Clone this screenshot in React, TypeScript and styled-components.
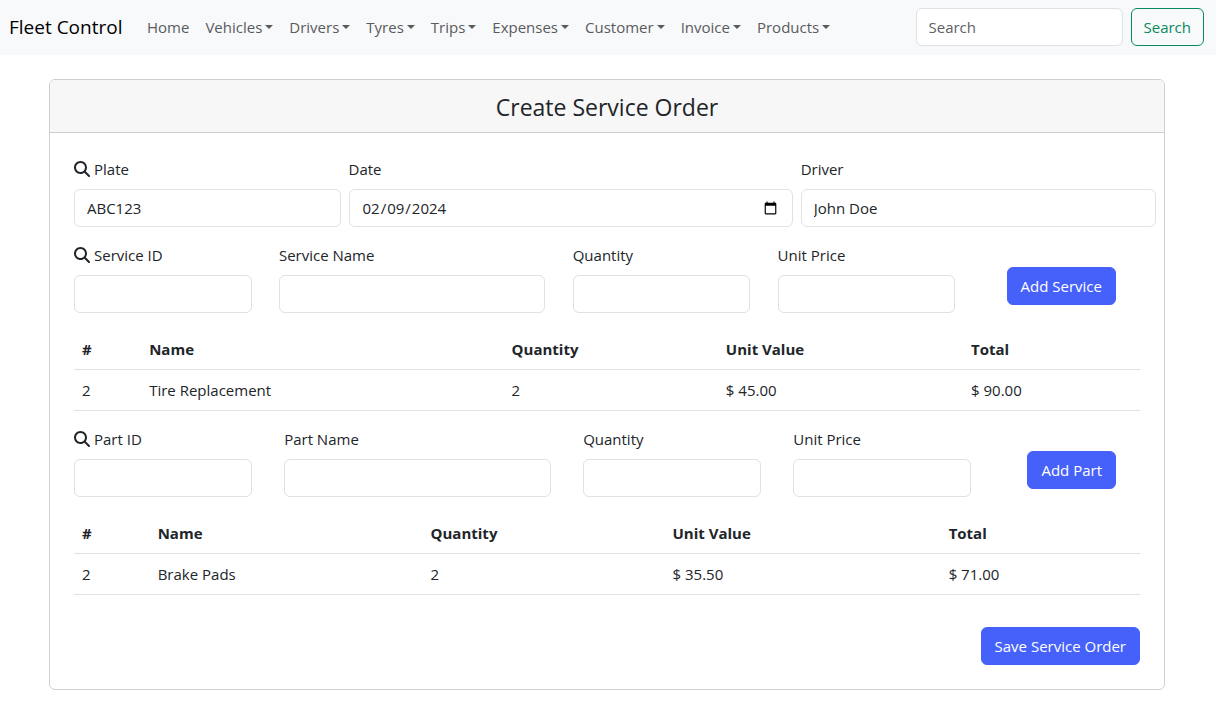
import React, { useId } from "react";
import styled, { createGlobalStyle } from "styled-components";
import { FaMagnifyingGlass } from "react-icons/fa6";

const GlobalStyle = createGlobalStyle`
  *, *::before, *::after { box-sizing: border-box; }
  body {
    margin: 0;
    background: #fff;
    color: #212529;
    font-family: "Open Sans", "Noto Sans", sans-serif;
    font-size: 15px;
    line-height: 24px;
  }
  button, input { font: inherit; }
`;

const Navbar = styled.nav`
  display: flex;
  align-items: center;
  padding: 8px 12px 9px 9px;
  background: #f8f9fb;
`;

const Brand = styled.a`
  width: 114px;
  margin-right: 16px;
  color: #000;
  font-size: 19px;
  line-height: 30px;
  white-space: nowrap;
  text-decoration: none;
`;

const NavList = styled.ul`
  display: flex;
  flex: 1;
  margin: 0;
  padding: 0;
  list-style: none;
`;

const NavLink = styled.a<{ $caret?: boolean }>`
  display: flex;
  align-items: center;
  gap: 3px;
  padding: 0 8px;
  color: #595b5d;
  white-space: nowrap;
  text-decoration: none;
  &::after {
    content: "";
    display: ${(p) => (p.$caret ? "block" : "none")};
    border: 4px solid transparent;
    border-top-color: currentColor;
    border-bottom: 0;
  }
`;

const SearchForm = styled.form`
  display: flex;
  gap: 8px;
`;

const Input = styled.input`
  display: block;
  width: 100%;
  min-width: 0;
  height: 38px;
  padding: 6px 12px;
  border: 1px solid #dee2e6;
  border-radius: 6px;
  background: #fff;
  color: #212529;
  &::placeholder { color: #5c6166; opacity: 1; }
`;

const SearchInput = styled(Input)`
  width: 207px;
`;

const Button = styled.button<{ $outline?: boolean }>`
  height: 38px;
  padding: 6px ${(p) => (p.$outline ? 12 : 13)}px;
  border: 1px solid ${(p) => (p.$outline ? "#0a8a5c" : "#4661fa")};
  border-radius: 6px;
  background: ${(p) => (p.$outline ? "transparent" : "#4661fa")};
  color: ${(p) => (p.$outline ? "#0a8a5c" : "#fff")};
  white-space: nowrap;
  cursor: pointer;
`;

const Main = styled.main`
  padding: 24px 51px 12px 49px;
`;

const Card = styled.section`
  border: 1px solid #cfcfd0;
  border-radius: 6px;
  background: #fff;
`;

const CardHeader = styled.header`
  padding: 13px 16px 11px;
  border-bottom: 1px solid #cfcfd0;
  border-radius: 5px 5px 0 0;
  background: #f7f7f7;
  text-align: center;
`;

const Title = styled.h4`
  margin: 0;
  font-size: 23px;
  font-weight: 400;
  line-height: 28px;
`;

const CardBody = styled.form`
  padding: 24px;
`;

const FieldRow = styled.div<{ $spread?: boolean }>`
  display: flex;
  align-items: center;
  justify-content: ${(p) => (p.$spread ? "space-between" : "flex-start")};
  gap: ${(p) => (p.$spread ? "0" : "8px")};
`;

const FieldBox = styled.div<{ $span: number }>`
  flex: none;
  width: calc(100% * ${(p) => p.$span} / 12);
  margin-bottom: 16px;
`;

const Label = styled.label`
  display: flex;
  align-items: center;
  gap: 4px;
  margin-bottom: 8px;
`;

const AddSlot = styled.div`
  padding: 0 24px;
`;

const Table = styled.table`
  width: 100%;
  margin-bottom: 16px;
  border-collapse: separate;
  border-spacing: 0;
  table-layout: fixed;
  th, td {
    padding: 8px;
    border-bottom: 1px solid #dee2e6;
    text-align: left;
  }
`;

const Col = styled.col<{ $share: number }>`
  width: ${(p) => p.$share}%;
`;

const Actions = styled.div`
  display: flex;
  justify-content: flex-end;
  padding-top: 16px;
`;

type FieldProps = { label: string; span: number; icon?: boolean; type?: string; value?: string };

function Field({ label, span, icon, type = "text", value }: FieldProps) {
  const id = useId();
  return (
    <FieldBox $span={span}>
      <Label htmlFor={id}>
        {icon && <FaMagnifyingGlass size={16} aria-hidden />}
        {label}
      </Label>
      <Input id={id} type={type} defaultValue={value} />
    </FieldBox>
  );
}

const HEADINGS = ["#", "Name", "Quantity", "Unit Value", "Total"];

function ItemTable({ shares, rows }: { shares: number[]; rows: string[][] }) {
  return (
    <Table>
      <colgroup>
        {shares.map((s, i) => <Col key={i} $share={s} />)}
      </colgroup>
      <thead>
        <tr>{HEADINGS.map((h) => <th key={h} scope="col">{h}</th>)}</tr>
      </thead>
      <tbody>
        {rows.map((row, r) => (
          <tr key={r}>{row.map((cell, c) => <td key={c}>{cell}</td>)}</tr>
        ))}
      </tbody>
    </Table>
  );
}

function ItemFields({ kind }: { kind: string }) {
  return (
    <FieldRow $spread>
      <Field label={`${kind} ID`} span={2} icon />
      <Field label={`${kind} Name`} span={3} />
      <Field label="Quantity" span={2} />
      <Field label="Unit Price" span={2} />
      <AddSlot>
        <Button type="button">Add {kind}</Button>
      </AddSlot>
    </FieldRow>
  );
}

const MENUS = ["Vehicles", "Drivers", "Tyres", "Trips", "Expenses", "Customer", "Invoice", "Products"];

export default function App() {
  return (
    <>
      <GlobalStyle />
      <Navbar>
        <Brand href="#">Fleet Control</Brand>
        <NavList>
          <li><NavLink href="#">Home</NavLink></li>
          {MENUS.map((m) => (
            <li key={m}><NavLink href="#" $caret>{m}</NavLink></li>
          ))}
        </NavList>
        <SearchForm role="search" onSubmit={(e) => e.preventDefault()}>
          <SearchInput type="search" placeholder="Search" aria-label="Search" />
          <Button type="submit" $outline>Search</Button>
        </SearchForm>
      </Navbar>
      <Main>
        <Card>
          <CardHeader><Title>Create Service Order</Title></CardHeader>
          <CardBody onSubmit={(e) => e.preventDefault()}>
            <FieldRow>
              <Field label="Plate" span={3} icon value="ABC123" />
              <Field label="Date" span={5} type="date" value="2024-02-09" />
              <Field label="Driver" span={4} value="John Doe" />
            </FieldRow>
            <ItemFields kind="Service" />
            <ItemTable
              shares={[6.3, 34, 20.1, 23, 16.6]}
              rows={[["2", "Tire Replacement", "2", "$ 45.00", "$ 90.00"]]}
            />
            <ItemFields kind="Part" />
            <ItemTable
              shares={[7.1, 25.6, 22.7, 25.9, 18.7]}
              rows={[["2", "Brake Pads", "2", "$ 35.50", "$ 71.00"]]}
            />
            <Actions>
              <Button type="submit">Save Service Order</Button>
            </Actions>
          </CardBody>
        </Card>
      </Main>
    </>
  );
}
